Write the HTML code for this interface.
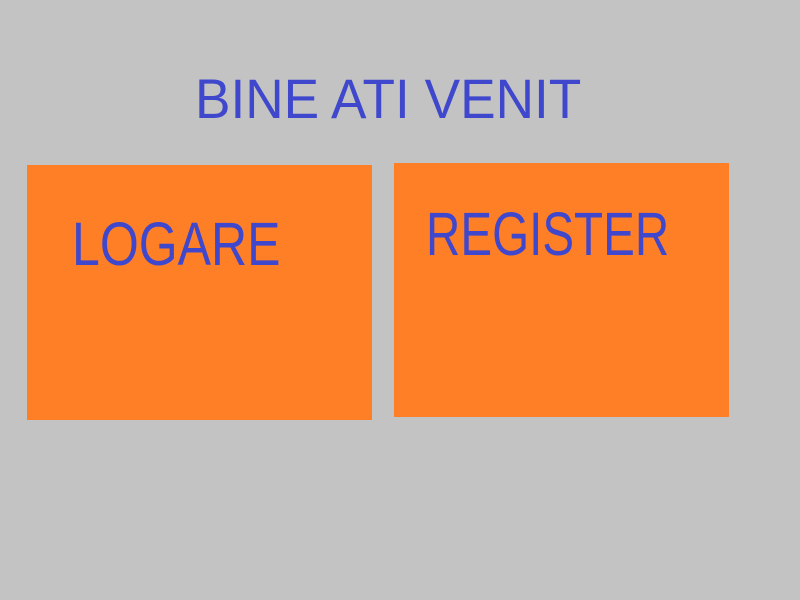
<!DOCTYPE html>
<html><head><meta charset="utf-8"><style>
html,body{margin:0;padding:0;}
body{width:800px;height:600px;background:#c3c3c3;position:relative;overflow:hidden;font-family:"Liberation Sans",sans-serif;}
.box{position:absolute;background:#ff7f27;}
.t{position:absolute;color:#3f48cc;line-height:1;white-space:nowrap;transform-origin:0 0;}
</style></head><body>
<div class="box" style="left:27px;top:165px;width:345px;height:255px"></div>
<div class="box" style="left:394px;top:163px;width:335px;height:254px"></div>
<div class="t" style="left:195px;top:71px;font-size:56px;transform:scaleX(0.95)">BINE ATI VENIT</div>
<div class="t" style="left:72px;top:214px;font-size:61px;transform:scaleX(0.82)">LOGARE</div>
<div class="t" style="left:426px;top:204px;font-size:61px;transform:scaleX(0.78)">REGISTER</div>
</body></html>
